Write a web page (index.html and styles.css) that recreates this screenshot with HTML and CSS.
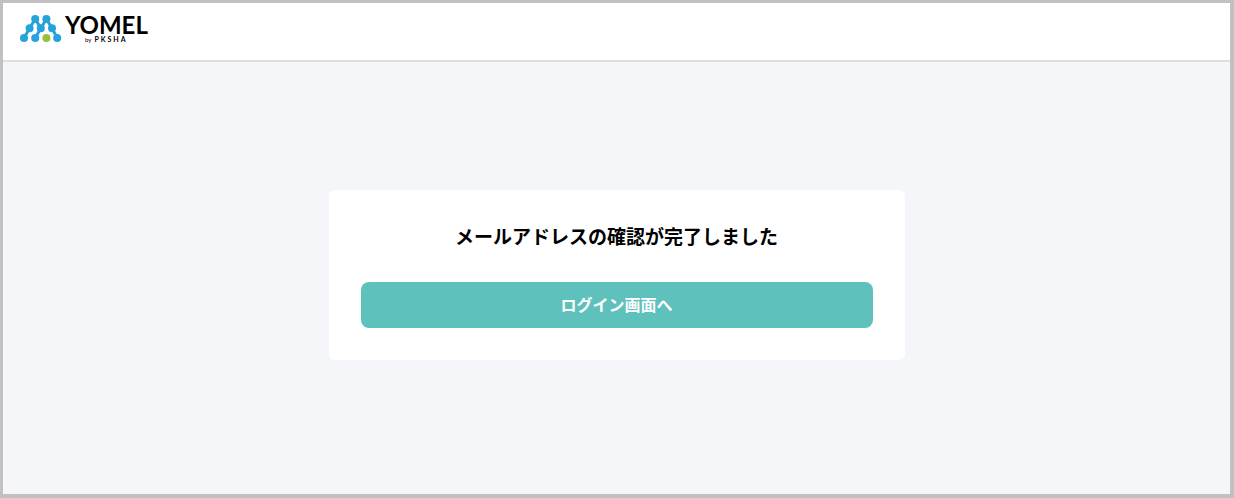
FILE: index.html
```html
<!DOCTYPE html>
<html lang="ja">
<head>
<meta charset="utf-8">
<meta name="viewport" content="width=device-width, initial-scale=1">
<title>YOMEL</title>
<link rel="stylesheet" href="styles.css">
</head>
<body class="page">
<header class="header">
  <a class="logo" href="#">
    <svg class="logo-mark" viewBox="0 0 42 28" width="42" height="28" aria-hidden="true">
      <g fill="none" stroke="#27a2db" stroke-width="3">
        <path d="M4 24 9.600 14.300 15.200 5 20.800 14.300 26.400 5 32 14.300 37.200 24"/>
        <path d="M15.200 24 20.800 14.300"/>
      </g>
      <g fill="#27a2db">
        <circle cx="15.200" cy="5" r="4"/><circle cx="26.400" cy="5" r="4"/>
        <circle cx="9.600" cy="14.300" r="4"/><circle cx="20.800" cy="14.300" r="4"/><circle cx="32" cy="14.300" r="4"/>
        <circle cx="4" cy="24" r="4"/><circle cx="15.200" cy="24" r="4"/><circle cx="37.200" cy="24" r="4"/>
      </g>
      <circle cx="26.400" cy="24" r="4" fill="#98bf3c"/>
    </svg>
    <span class="logo-words">
      <span class="logo-name">YOMEL</span>
      <span class="logo-byline"><span class="logo-by">by</span><span class="logo-company">PKSHA</span></span>
    </span>
  </a>
</header>
<main class="main">
  <section class="card">
    <h1 class="card-title">メールアドレスの確認が完了しました</h1>
    <button class="button" type="button">ログイン画面へ</button>
  </section>
</main>
</body>
</html>
```
FILE: styles.css
```css
* {
  box-sizing: border-box;
}

.page {
  display: flex;
  flex-direction: column;
  min-height: 100vh;
  margin: 0;
  border: solid #c1c1c1;
  border-width: 3px 4px 4px 3px;
  background: #f4f6fa;
  color: #000;
  font-family: "Noto Sans CJK JP", sans-serif;
}

.header {
  padding: 11px 17px 16px;
  border-bottom: 2px solid #dedee0;
  background: #fff;
}

.logo {
  display: flex;
  gap: 3px;
  width: fit-content;
  color: #000;
  text-decoration: none;
}

.logo-words {
  display: flex;
  flex-direction: column;
  font-family: Lato, sans-serif;
}

.logo-name {
  font-size: 24px;
  font-weight: 700;
  line-height: 21px;
}

.logo-byline {
  display: flex;
  align-items: baseline;
  gap: 3px;
  padding-left: 20px;
  line-height: 8px;
}

.logo-by {
  font-size: 6px;
}

.logo-company {
  font-size: 7px;
  font-weight: 700;
  letter-spacing: 2px;
}

.main {
  flex: 1;
  padding: 128px 16px 32px;
}

.card {
  max-width: 576px;
  margin: 0 auto;
  padding: 32px;
  border-radius: 6px;
  background: #fff;
}

.card-title {
  margin: 0 0 32px;
  font-size: 19px;
  font-weight: 700;
  line-height: 28px;
  text-align: center;
}

.button {
  display: block;
  width: 100%;
  padding: 10px 16px 12px;
  border: 0;
  border-radius: 8px;
  background: #5fc1bc;
  color: #fff;
  font: inherit;
  font-size: 16px;
  font-weight: 700;
  line-height: 24px;
  cursor: pointer;
}
```
